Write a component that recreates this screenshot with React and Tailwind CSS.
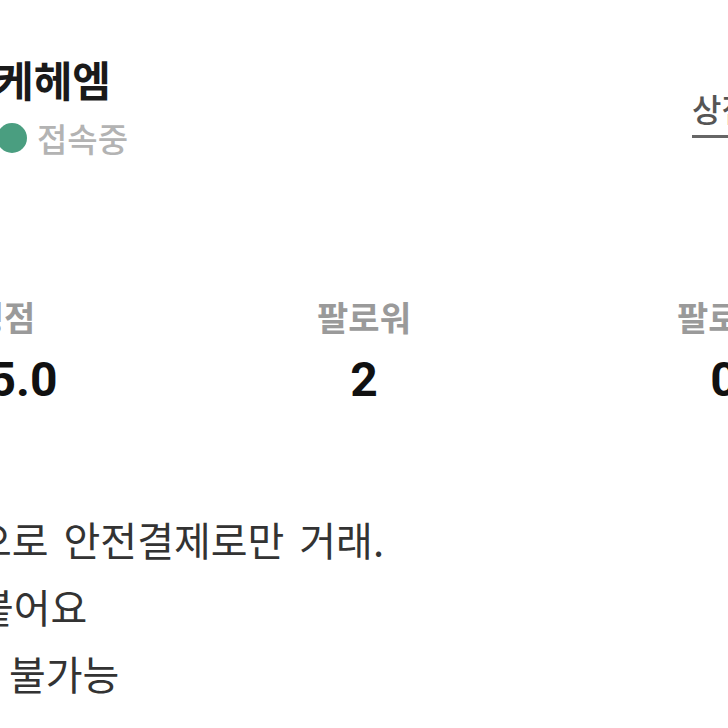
export default function App() {
  const kr = "font-['Noto_Sans_CJK_KR','Noto_Sans',sans-serif]";
  const num = "font-['Roboto','Noto_Sans_CJK_KR',sans-serif]";
  return (
    <div className={`w-[728px] h-[728px] overflow-hidden bg-white ${kr}`}>
      {/* header */}
      <div className="flex pt-[54px] ml-[-3px] w-[900px]">
        <div className="w-[695px] shrink-0">
          <div className="text-[42px] leading-[50px] font-bold text-[#1a1a1a] ml-[-2px]">
            케헤엠
          </div>
          <div className="flex items-center mt-[14px] h-[40px] gap-[10px]">
            <span className="w-[30px] h-[30px] rounded-full bg-[#4a9e80] shrink-0" />
            <span className="text-[33px] leading-[40px] font-medium text-[#b3b3b3]">접속중</span>
          </div>
        </div>
        <div className="pt-[34px] whitespace-nowrap">
          <span className="inline-block text-[32px] leading-[40px] font-medium text-[#555555] border-b-[3px] border-[#666666] pb-[7px]">
            상점 가기
          </span>
        </div>
      </div>

      {/* stats */}
      <div className="grid grid-cols-3 w-[1080px] ml-[-176px] mt-[139px]">
        <div className="flex flex-col items-center">
          <div className="text-[34px] leading-[40px] font-bold text-[#9a9a9a]">평점</div>
          <div className={`ml-[38px] mt-[19px] text-[48px] leading-[48px] font-bold text-[#111111] ${num}`}>5.0</div>
        </div>
        <div className="flex flex-col items-center">
          <div className="text-[34px] leading-[40px] font-bold text-[#9a9a9a]">팔로워</div>
          <div className={`mt-[19px] text-[48px] leading-[48px] font-bold text-[#111111] ${num}`}>2</div>
        </div>
        <div className="flex flex-col items-center">
          <div className="text-[34px] leading-[40px] font-bold text-[#9a9a9a]">팔로잉</div>
          <div className={`mt-[19px] text-[48px] leading-[48px] font-bold text-[#111111] ${num}`}>0</div>
        </div>
      </div>

      {/* description */}
      <div className="mt-[102px] text-[40px] leading-[67px] text-[#333333] whitespace-nowrap">
        <div className="ml-[-25px] [word-spacing:6px]">으로 안전결제로만 거래.</div>
        <div className="ml-[-23px]">붙어요</div>
        <div className="ml-[9px]">불가능</div>
      </div>
    </div>
  );
}
